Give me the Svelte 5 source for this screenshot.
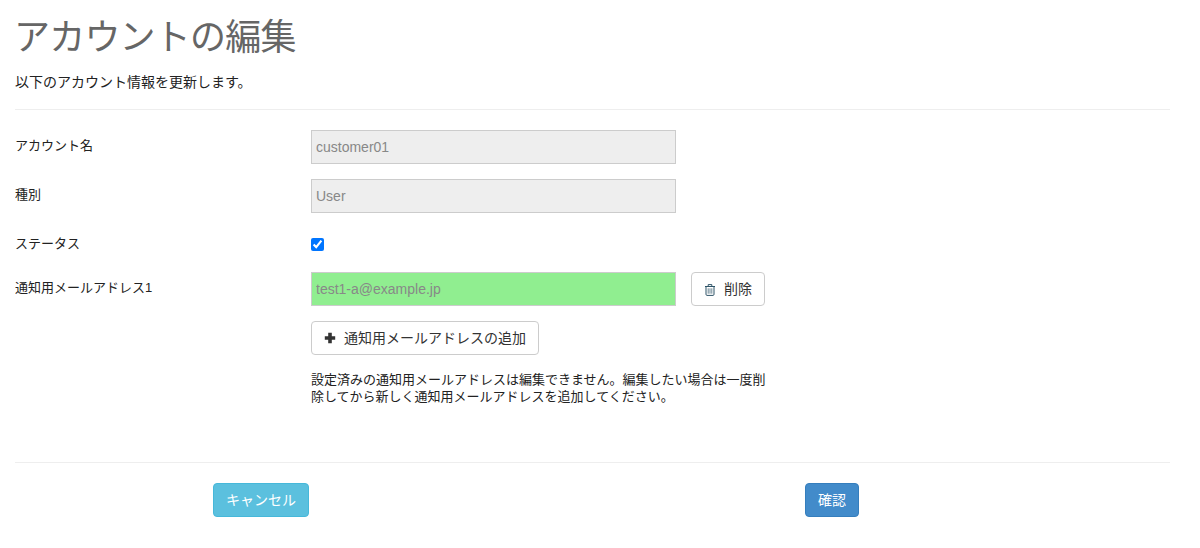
<script lang="ts">
  let active = $state(true);
  let emails = $state(["test1-a@example.jp"]);
</script>

<div class="page">
  <h1>アカウントの編集</h1>
  <p class="lead">以下のアカウント情報を更新します。</p>
  <hr />

  <form class="form" onsubmit={(e) => e.preventDefault()}>
    <div class="row">
      <label for="name">アカウント名</label>
      <input id="name" class="ctl" value="customer01" disabled />
    </div>
    <div class="row">
      <label for="kind">種別</label>
      <input id="kind" class="ctl" value="User" disabled />
    </div>
    <div class="row status">
      <label for="status">ステータス</label>
      <input id="status" type="checkbox" bind:checked={active} />
    </div>
    {#each emails as mail, i}
      <div class="row mail">
        <label for="mail{i}">通知用メールアドレス{i + 1}</label>
        <input id="mail{i}" class="ctl green" value={mail} disabled />
        <button type="button" class="btn del">
          <svg width="12" height="13" viewBox="0 0 12 13" aria-hidden="true">
            <path d="M1 3.5h10M4.2 3.2V1.6h3.6v1.6M2 3.7v7.6c0 .7.4 1.1 1 1.1h6c.6 0 1-.4 1-1.1V3.7" fill="none" stroke="#2f5468" stroke-width="1" />
            <path d="M4.2 5.3v5.4M6 5.3v5.4M7.8 5.3v5.4" fill="none" stroke="#2f5468" stroke-width=".7" />
          </svg>
          削除
        </button>
      </div>
    {/each}
    <div class="row add">
      <button type="button" class="btn">
        <svg width="12" height="12" viewBox="0 0 12 12" aria-hidden="true">
          <path d="M4.2 .8h3.6v3.4h3.4v3.6H7.8v3.4H4.2V7.8H.8V4.2h3.4z" fill="#333" />
        </svg>
        通知用メールアドレスの追加
      </button>
    </div>
    <p class="note">設定済みの通知用メールアドレスは編集できません。編集したい場合は一度削除してから新しく通知用メールアドレスを追加してください。</p>
  </form>

  <hr class="foot-line" />
  <div class="actions">
    <button type="button" class="btn info">キャンセル</button>
    <button type="button" class="btn primary">確認</button>
  </div>
</div>

<style>
  :global(body) {
    margin: 0; background: #fff; color: #333;
    font-family: "Liberation Sans", "Noto Sans CJK JP", sans-serif;
    font-size: 14px; line-height: 1.42857;
  }
  .page { width: 1155px; height: 548px; margin-left: 15px; overflow: hidden; }
  h1 {
    margin: 18px 0 0 -1px; font-size: 36px; line-height: 40px; font-weight: 400; color: #666;
    letter-spacing: -0.8px;
  }
  .lead { margin: 14px 0 0; line-height: 20px; color: #222; }
  hr { margin: 17px 0 0; border: 0; border-top: 1px solid #eee; }

  .form { margin-top: 20px; }
  .row {
    display: grid; grid-template-columns: 296px 365px auto; justify-content: start;
    align-items: start; margin-bottom: 15px;
  }
  label { font-size: 13px; font-weight: 400; color: #222; line-height: 20px; padding-top: 6px; }
  .ctl {
    box-sizing: border-box; width: 365px; height: 34px; padding: 6px 4px; margin: 0;
    border: 1px solid #ccc; border-radius: 0; background: #eee; color: #888;
    font: 14px/20px "Liberation Sans", "Noto Sans CJK JP", sans-serif;
    opacity: 1;
  }
  .green { background: #90ee90; }
  .status { height: 34px; margin-bottom: 10px; }
  .status input { margin: 10px 0 0; width: 13px; height: 13px; }

  .btn {
    box-sizing: border-box; height: 34px; padding: 6px 12px; border: 1px solid #ccc;
    border-radius: 4px; background: #fff; color: #333; cursor: pointer;
    font: 14px/20px "Liberation Sans", "Noto Sans CJK JP", sans-serif;
    display: inline-flex; align-items: center; gap: 8px; white-space: nowrap;
  }
  .del { margin-left: 15px; width: 74px; }
  .add { margin-bottom: 16px; }
  .add .btn { grid-column: 2 / 4; justify-self: start; }

  .note {
    margin: 0 0 0 296px; width: 458px; line-height: 17px; color: #222;
    font-size: 13px;
  }
  .foot-line { margin-top: 57px; }
  .actions {
    display: flex; justify-content: space-between;
    margin-top: 20px; padding: 0 311px 0 198px;
  }
  .info { background: #5bc0de; border-color: #46b8da; color: #fff; }
  .primary { background: #428bca; border-color: #357ebd; color: #fff; }
</style>
